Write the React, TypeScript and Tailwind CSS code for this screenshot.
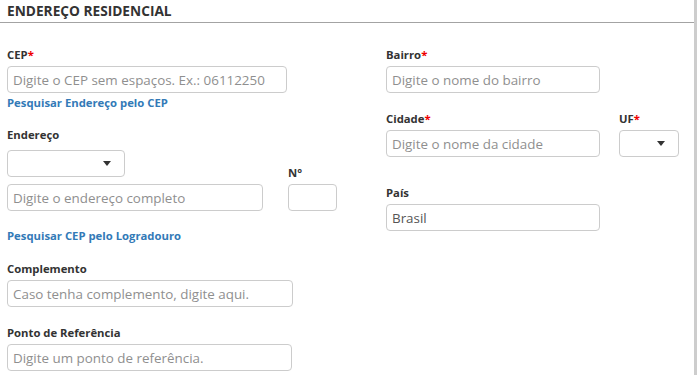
import React from 'react'

const font = { fontFamily: '"Open Sans", "Noto Sans", sans-serif' }

function Label({ text, required }: { text: string; required?: boolean }) {
  return (
    <div className="h-[17px] mb-[3px] text-[11.3px] leading-[17px] font-bold text-[#333]">
      {text}
      {required && <span className="text-[#e00]">*</span>}
    </div>
  )
}

function Input({ placeholder, value, w }: { placeholder?: string; value?: string; w: string }) {
  return (
    <input
      readOnly
      value={value}
      placeholder={placeholder}
      className={`${w} block h-[27px] rounded-[4px] border border-[#ccc] bg-white px-[5px] text-[13.4px] text-[#555] placeholder:text-[#8f8f8f] outline-none`}
    />
  )
}

function Select({ w }: { w: string }) {
  return (
    <div className={`${w} flex h-[27px] items-center justify-end rounded-[4px] border border-[#ccc] bg-white pr-[13px]`}>
      <svg width="8" height="5" viewBox="0 0 8 5">
        <path d="M0 0h8L4 5z" fill="#333" />
      </svg>
    </div>
  )
}

function Link({ text }: { text: string }) {
  return <div className="h-[17px] text-[11.3px] leading-[17px] font-bold text-[#337ab7]">{text}</div>
}

export default function App() {
  return (
    <div className="flex h-[375px] w-[697px] bg-white" style={font}>
      <div className="flex-1">
        <div className="h-[23px] border-b border-[#a3a3a3] pl-[7px] pt-[2px] text-[13.7px] leading-[18px] font-bold text-[#333]">
          ENDEREÇO RESIDENCIAL
        </div>
        <div className="flex pl-[7px]">
          {/* coluna esquerda */}
          <div className="w-[379px] pt-[23px]">
            <Label text="CEP" required />
            <Input w="w-[280px]" placeholder="Digite o CEP sem espaços. Ex.: 06112250" />
            <div className="mt-[1px]">
              <Link text="Pesquisar Endereço pelo CEP" />
            </div>
            <div className="mt-[15px]">
              <Label text="Endereço" />
            </div>
            <div className="mt-[7px] flex items-end gap-[25px]">
              <div className="flex flex-col gap-[7px]">
                <Select w="w-[118px]" />
                <Input w="w-[256px]" placeholder="Digite o endereço completo" />
              </div>
              <div>
                <Label text="N°" />
                <Input w="w-[49px]" />
              </div>
            </div>
            <div className="mt-[16px]">
              <Link text="Pesquisar CEP pelo Logradouro" />
            </div>
            <div className="mt-[16px]">
              <Label text="Complemento" />
              <Input w="w-[286px]" placeholder="Caso tenha complemento, digite aqui." />
            </div>
            <div className="mt-[17px]">
              <Label text="Ponto de Referência" />
              <Input w="w-[285px]" placeholder="Digite um ponto de referência." />
            </div>
          </div>

          {/* coluna direita */}
          <div className="flex-1 pt-[23px]">
            <Label text="Bairro" required />
            <Input w="w-[214px]" placeholder="Digite o nome do bairro" />
            <div className="mt-[17px] flex gap-[19px]">
              <div>
                <Label text="Cidade" required />
                <Input w="w-[214px]" placeholder="Digite o nome da cidade" />
              </div>
              <div>
                <Label text="UF" required />
                <Select w="w-[60px]" />
              </div>
            </div>
            <div className="mt-[27px]">
              <Label text="País" />
              <Input w="w-[214px]" value="Brasil" />
            </div>
          </div>
        </div>
      </div>
      <div className="w-[3px] bg-[#cdcdcd]" />
    </div>
  )
}
